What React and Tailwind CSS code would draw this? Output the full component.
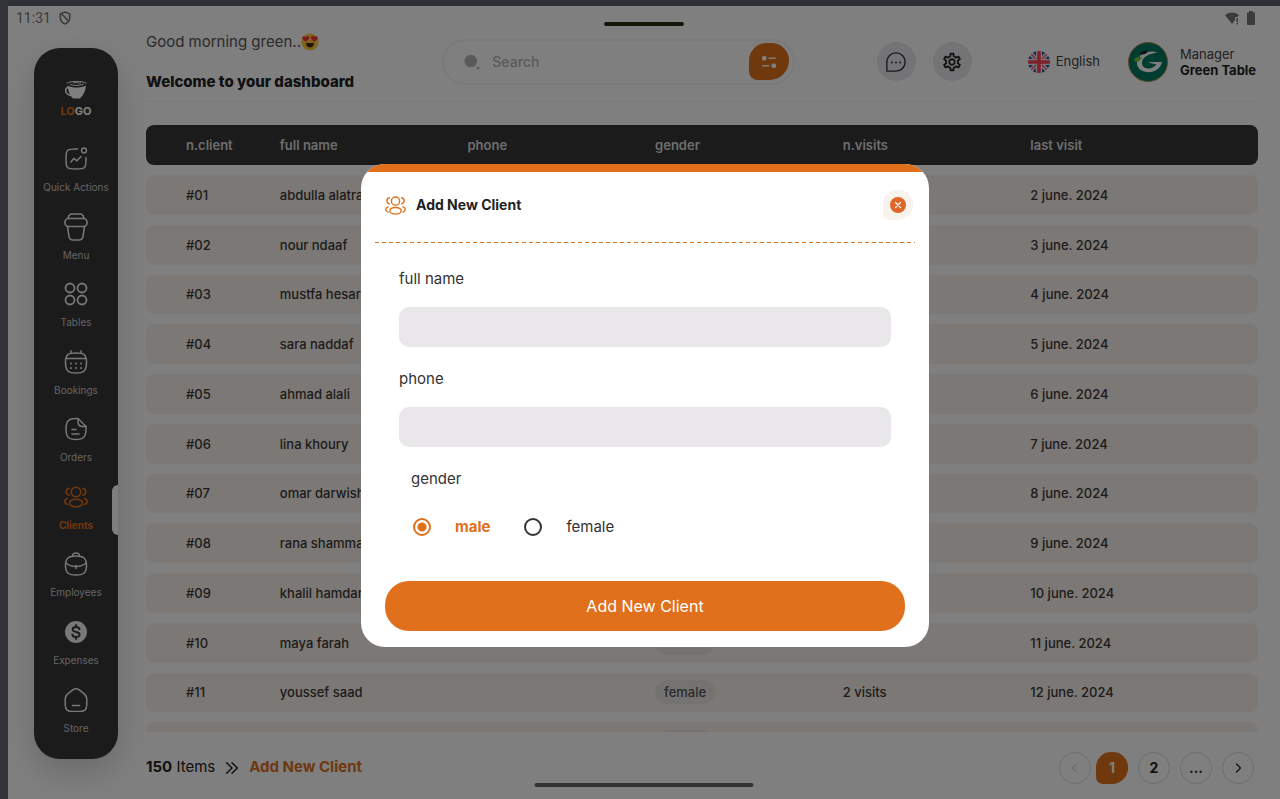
import React, { useState } from "react";
import { MdOutlineSettings } from "react-icons/md";

function Svg({ size = "size-6", children, width = 1.5 }) {
  return (
    <svg viewBox="0 0 24 24" fill="none" stroke="currentColor" strokeWidth={width} strokeLinecap="round" strokeLinejoin="round" className={`${size} shrink-0`} aria-hidden="true">
      {children}
    </svg>
  );
}

function UsersIcon({ size }) {
  return (
    <Svg size={size} width={1.6}>
      <circle cx="12" cy="7" r="4.7" />
      <path d="M19 3.200c1.800.4 2.800 1.700 2.800 3.400S20.700 9.700 19 10.200M5 3.200C3.200 3.600 2.200 4.900 2.200 6.600S3.300 9.700 5 10.200" />
      <ellipse cx="12" cy="18" rx="6.500" ry="3.800" />
      <path d="M20.500 13.500c1.700.5 2.700 1.500 2.700 2.900 0 1.500-1 2.600-2.700 3.100M3.500 13.500C1.800 14 .8 15 .8 16.400c0 1.500 1 2.600 2.700 3.100" />
    </Svg>
  );
}

const NAV = [
  {
    label: "Quick Actions",
    icon: (
      <Svg>
        <path d="M22 10.5V12c0 4.7 0 7.07-1.46 8.54C19.07 22 16.7 22 12 22s-7.07 0-8.54-1.46C2 19.07 2 16.7 2 12s0-7.07 1.46-8.54C4.93 2 7.3 2 12 2h1.5" />
        <circle cx="20" cy="3.500" r="2.400" />
        <path d="M7 15l2.8-3.6 3 2.4L17 9.5" />
      </Svg>
    ),
  },
  {
    label: "Menu",
    icon: (
      <svg viewBox="0 0 24 28" fill="none" stroke="currentColor" strokeWidth="1.6" strokeLinejoin="round" className="-my-0.5 h-7 w-6 shrink-0" aria-hidden="true">
        <path d="M4 5.5C4.6 2 6 1 8 1h8c2 0 3.400 1 4 4.500" />
        <rect x="1" y="5.500" width="22" height="8" rx="3.500" />
        <path d="M3.500 13.500l1.400 9.500c.4 2.700 1.700 4 4.100 4h6c2.400 0 3.700-1.300 4.100-4l1.400-9.500" />
      </svg>
    ),
  },
  {
    label: "Tables",
    icon: (
      <Svg width={1.8}>
        <circle cx="6" cy="6" r="4.5" />
        <circle cx="18" cy="6" r="4.5" />
        <circle cx="6" cy="18" r="4.5" />
        <circle cx="18" cy="18" r="4.5" />
      </Svg>
    ),
  },
  {
    label: "Bookings",
    icon: (
      <Svg>
        <path d="M2 8.500h20M7 3.500V.8M17 3.500V.8" />
        <path d="M12 3c-8 0-10.500 1-10.500 9.500 0 8.500 3 10.500 10.500 10.500s10.500-2 10.500-10.500C22.500 4 20 3 12 3z" />
        <path strokeWidth="2" d="M7 13.500h.01M12 13.500h.01M17 13.500h.01M7 18h.01M12 18h.01M17 18h.01" />
      </Svg>
    ),
  },
  {
    label: "Orders",
    icon: (
      <Svg>
        <path d="M14 1.500h-2C4.500 1.500 2 4 2 12s2.500 10.500 10 10.500S22 20 22 12V9.500z" />
        <path d="M14 1.500V5c0 3 1.500 4.500 4.500 4.500H22M8 12.500h4M8 17h7" />
      </Svg>
    ),
  },
  { label: "Clients", icon: <UsersIcon />, active: true },
  {
    label: "Employees",
    icon: (
      <Svg>
        <path d="M8.500 4c0-2 1-3 3.500-3s3.500 1 3.500 3" />
        <path d="M12 4C5 4 1.500 5.500 1.500 13.500S5 23 12 23s10.500-1.500 10.500-9.500S19 4 12 4z" />
        <path d="M1.800 11c3 2.500 6.500 3.500 10.200 3.500s7.200-1 10.200-3.500M12 13.500v3" />
      </Svg>
    ),
  },
  {
    label: "Expenses",
    icon: (
      <Svg>
        <circle cx="12" cy="12" r="11" fill="currentColor" stroke="none" />
        <path stroke="#363636" strokeWidth="1.900" d="M15.500 9.300C15.200 7.700 13.900 7 12 7c-2 0-3.400.9-3.400 2.500C8.600 13 15.600 11 15.600 14.500c0 1.600-1.500 2.500-3.600 2.500s-3.400-.9-3.700-2.500M12 5v2M12 17v2" />
      </Svg>
    ),
  },
  {
    label: "Store",
    icon: (
      <Svg>
        <path d="M9.200 1.700L4 5.700C2 7.300 1.200 8.500 1.200 11v5c0 5.500 1.500 7.500 7 7.500h7.600c5.500 0 7-2 7-7.500v-5c0-2.500-.8-3.700-2.800-5.300l-5.200-4c-2-1.500-3.600-1.500-5.600 0z" />
        <path d="M8.500 17.500h7" />
      </Svg>
    ),
  },
];

const CLIENTS = [
  ["#01", "abdulla alatrash", "male", "2 visits", "2 june. 2024"],
  ["#02", "nour ndaaf", "female", "2 visits", "3 june. 2024"],
  ["#03", "mustfa hesary", "male", "2 visits", "4 june. 2024"],
  ["#04", "sara naddaf", "female", "2 visits", "5 june. 2024"],
  ["#05", "ahmad alali", "male", "2 visits", "6 june. 2024"],
  ["#06", "lina khoury", "female", "2 visits", "7 june. 2024"],
  ["#07", "omar darwish", "male", "2 visits", "8 june. 2024"],
  ["#08", "rana shammas", "female", "2 visits", "9 june. 2024"],
  ["#09", "khalil hamdan", "male", "2 visits", "10 june. 2024"],
  ["#10", "maya farah", "", "", "11 june. 2024"],
  ["#11", "youssef saad", "female", "2 visits", "12 june. 2024"],
  ["", "", "", "", ""],
];

const COLUMNS = ["n.client", "full name", "phone", "gender", "n.visits", "last visit"];

function StatusBar() {
  return (
    <div className="flex h-6 shrink-0 items-center justify-between pr-6 pl-2 text-[#777]">
      <div className="flex items-center gap-2 font-[Roboto,sans-serif] text-sm">
        <span>11:31</span>
        <svg viewBox="0 0 14 16" className="h-3.5 w-3" fill="none" stroke="currentColor" strokeWidth="1.800" aria-hidden="true">
          <path d="M7 1L1.500 3v4.500C1.500 11 4 13.800 7 15c3-1.200 5.500-4 5.500-7.500V3z" />
          <path d="M3 3l8.500 9" />
        </svg>
      </div>
      <div className="flex items-center gap-1.5">
        <svg viewBox="0 0 16 14" className="h-3.5 w-4" fill="currentColor" aria-hidden="true">
          <path d="M1 4.200C4.500.6 11.500.6 15 4.200L13.200 6H11v3.200L8 13z" />
          <path d="M12.400 7h1.500v4h-1.500zM12.400 12h1.500v1.500h-1.500z" />
        </svg>
        <svg viewBox="0 0 10 14" className="h-3.5 w-2.5" fill="currentColor" aria-hidden="true">
          <path d="M3 0h4v1.500h1c.7 0 1 .4 1 1V13c0 .6-.3 1-1 1H2c-.7 0-1-.4-1-1V2.500c0-.6.3-1 1-1h1z" />
        </svg>
      </div>
    </div>
  );
}

function Sidebar() {
  return (
    <aside className="mt-[18px] mb-10 ml-[26px] flex w-21 shrink-0 flex-col rounded-[26px] bg-[#363636] pt-8 pb-1 shadow-[0_12px_32px_rgba(0,0,0,0.18)]">
      <div className="flex h-[67px] shrink-0 flex-col items-center gap-1 text-white">
        <svg viewBox="0 0 24 19" className="h-[19px] w-6" aria-hidden="true">
          <path d="M3.500 5.500c5 2.800 13 2.800 18.500 0-.3 5-2.500 10-6.200 13H9.200C6 16 4 11 3.500 5.500z" fill="#fff" />
          <path d="M4 7.500C.5 7.500.5 14.500 7 15.500" fill="none" stroke="#fff" strokeWidth="1.500" />
          <path d="M2.500 3.200C7 .8 18 .8 22.500 3.200M6 4.500c4 1.300 9.500 1.300 13.500-.3M9 2.800c3-1 6 .9 8 0" fill="none" stroke="#fff" strokeWidth="1" />
        </svg>
        <p className="text-[11px] leading-4 font-bold">
          <span className="text-[#e0701b]">LO</span>GO
        </p>
      </div>
      <nav className="flex flex-1 flex-col">
        {NAV.map((item) => (
          <a
            key={item.label}
            href="#"
            aria-current={item.active ? "page" : undefined}
            className={`relative flex flex-1 flex-col items-center gap-2.5 text-[10px] leading-3 ${item.active ? "font-bold text-[#e0701b]" : "text-[#f0f0f0]"}`}
          >
            {item.icon}
            <span className={item.active ? "" : "text-[#c8c8c8]"}>{item.label}</span>
            {item.active && <span className="absolute top-0 right-0 h-[50px] w-1.5 rounded-l-md bg-white" />}
          </a>
        ))}
      </nav>
    </aside>
  );
}

function Header() {
  return (
    <header className="flex h-[72px] shrink-0 items-center justify-between border-b border-[#f2f2f2] pb-2">
      <div className="flex w-[215px] flex-col gap-5 leading-5">
        <p className="flex items-center text-[15px] whitespace-nowrap text-[#555]">
          Good morning green..
          <svg viewBox="0 0 20 20" className="size-[18px]" role="img" aria-label="heart eyes">
            <circle cx="10" cy="10" r="9.500" fill="#ffc83d" />
            <path d="M5.500 11h9c-.3 3.500-2 5-4.500 5s-4.200-1.500-4.500-5z" fill="#4a2a10" />
            <path d="M5.500 10L1.500 6.500C.5 4 3 2.500 5 4.500c1.500-2.300 4.500-1 4 1.500z" fill="#ff3038" />
            <path d="M14.500 10l4-3.500c1-2.500-1.500-4-3.500-2-1.500-2.300-4.500-1-4 1.500z" fill="#ff3038" />
          </svg>
        </p>
        <h1 className="text-[15px] font-extrabold whitespace-nowrap text-[#222]">Welcome to your dashboard</h1>
      </div>

      <div className="flex h-[46px] w-[353px] items-center gap-3 rounded-full border-2 border-[#f4f4f6] pr-1 pl-5">
        <svg viewBox="0 0 16 16" className="size-4 shrink-0 text-[#b4b4b8]" fill="currentColor" aria-hidden="true">
          <circle cx="6.800" cy="7" r="6.300" />
          <circle cx="14" cy="14" r="1.500" />
        </svg>
        <input type="search" aria-label="Search" placeholder="Search" className="min-w-0 flex-1 bg-transparent text-sm font-medium outline-none placeholder:text-[#b4b4b8]" />
        <button type="button" aria-label="Filter" className="flex h-[37px] w-10 items-center justify-center rounded-[18px_18px_20px_9px] bg-[#e0701b]">
          <svg viewBox="0 0 16 14" className="h-3.5 w-4" fill="#fff" aria-hidden="true">
            <rect x="1" y="1" width="4.500" height="4.500" rx="1.500" />
            <rect x="7.500" y="2.500" width="7.500" height="1.600" rx=".8" />
            <rect x="10.500" y="8.500" width="4.500" height="4.500" rx="1.500" />
            <rect x="1" y="10" width="7.500" height="1.600" rx=".8" />
          </svg>
        </button>
      </div>

      <div className="flex items-center gap-7">
        <div className="mr-7 flex gap-[17px]">
          <button type="button" aria-label="Messages" className="flex size-[39px] items-center justify-center rounded-full bg-[#e9e7ea] text-[#333]">
            <Svg size="size-[22px]">
              <path d="M2 22V12A10 10 0 1 1 12 22z" />
              <path strokeWidth="2" d="M7.500 12.500h.01M12 12.500h.01M16.500 12.500h.01" />
            </Svg>
          </button>
          <button type="button" aria-label="Settings" className="flex size-[39px] items-center justify-center rounded-full bg-[#e9e7ea] text-[#222]">
            <MdOutlineSettings className="size-[22px]" />
          </button>
        </div>
        <button type="button" className="flex items-center gap-1.5 text-[13px] text-[#444]">
          <svg viewBox="0 0 22 22" className="size-[22px]" aria-hidden="true">
            <clipPath id="flag"><circle cx="11" cy="11" r="11" /></clipPath>
            <g clipPath="url(#flag)">
              <path fill="#f0f0f0" d="M0 0h22v22H0z" />
              <path fill="#2a5cb0" d="M8 0v5L3 0zM0 3l5 5H0zM14 0v5l5-5zM22 3l-5 5h5zM8 22v-5l-5 5zM0 19l5-5H0zM14 22v-5l5 5zM22 19l-5-5h5z" />
              <path stroke="#ff4055" strokeWidth="1.200" d="M1 1l7 7M21 1l-7 7M1 21l7-7M21 21l-7-7" />
              <path fill="#ff4055" d="M9.200 0h3.600v9.200H22v3.600h-9.200V22H9.200v-9.200H0V9.200h9.200z" />
            </g>
          </svg>
          English
        </button>
        <div className="flex items-center gap-3">
          <svg viewBox="0 0 40 40" className="size-10" role="img" aria-label="Green Table">
            <circle cx="20" cy="20" r="19.500" fill="#007a60" stroke="#b08a4a" strokeWidth="1" />
            <path d="M29.500 10.500C22 7.500 10 11 9 20c-.6 8 7.500 11 14 10 6-1 10-5 11-10H20.500c2.500 1.500 5 2 8 2-2 3.500-6 5-10 4.200-5-1-6-6.500-2.500-10.200 3.500-3.800 8.500-4.500 13.500-5.500z" fill="#fff" />
            <path d="M6 17c1.500-1.500 5-3 8-2-1 3-3.500 5-6.500 5C6.500 19 6 18 6 17z" fill="#7fbf3a" />
            <path d="M12 12c2-3.500 6-4 8-3-1 2.500-4 4.500-8 3z" fill="#222" />
          </svg>
          <p className="w-[78px] text-[13px] leading-4 whitespace-nowrap text-[#444]">
            Manager
            <br />
            <strong className="font-bold text-[#222]">Green Table</strong>
          </p>
        </div>
      </div>
    </header>
  );
}

function ClientsTable() {
  return (
    <div className="mt-[23px] min-h-0 flex-1 overflow-hidden">
      <table className="block w-full text-[13px] leading-5 text-[#383838]">
        <thead className="block">
          <tr className="grid h-10 grid-cols-11 items-center rounded-lg bg-[#363636] px-10 text-left text-[#dcdcdc]">
            {COLUMNS.map((c) => (
              <th key={c} scope="col" className="col-span-2 font-semibold first:col-span-1">{c}</th>
            ))}
          </tr>
        </thead>
        <tbody className="mt-2.5 grid h-[587px] auto-rows-fr gap-2.5">
          {CLIENTS.map(([id, name, gender, visits, date], i) => (
            <tr key={i} className="grid grid-cols-11 items-center rounded-lg bg-[#f9f0ea] px-10 font-medium whitespace-nowrap">
              <td>{id}</td>
              <td className="col-span-2">{name}</td>
              <td className="col-span-2" />
              <td className="col-span-2">
                <span className="flex h-6 w-15 items-center justify-center rounded-full bg-[#ebe6e3] text-[#555]">{gender}</span>
              </td>
              <td className="col-span-2">{visits}</td>
              <td className="col-span-2">{date}</td>
            </tr>
          ))}
        </tbody>
      </table>
    </div>
  );
}

function Footer() {
  const circle = "flex size-8 items-center justify-center rounded-full border border-[#dcdcdc] text-[#222]";
  return (
    <footer className="flex h-[67px] shrink-0 items-center justify-between pt-1 pr-1">
      <div className="flex items-center gap-[9px] text-[15px] text-[#222]">
        <p><b>150</b> Items</p>
        <Svg size="size-4" width={2.2}>
          <path d="M4 4l8 8-8 8M12 4l8 8-8 8" />
        </Svg>
        <a href="#" className="font-bold text-[#e0701b]">Add New Client</a>
      </div>
      <nav aria-label="Pages" className="flex gap-2.5 text-sm font-bold">
        <div className="flex gap-[5px]">
          <button type="button" aria-label="Previous page" className={circle}>
            <Svg size="size-3" width={2}><path className="text-[#bbb]" stroke="currentColor" d="M15 4l-8 8 8 8" /></Svg>
          </button>
          <button type="button" className="flex size-8 items-center justify-center rounded-[15px_15px_16px_7px] bg-[#e0701b] text-white">1</button>
        </div>
        <button type="button" className={circle}>2</button>
        <button type="button" className={circle}>...</button>
        <button type="button" aria-label="Next page" className={circle}>
          <Svg size="size-3" width={2.4}><path d="M9 4l8 8-8 8" /></Svg>
        </button>
      </nav>
    </footer>
  );
}

function AddClientDialog() {
  const [gender, setGender] = useState("male");
  return (
    <div className="absolute inset-0 flex items-center justify-center bg-black/50 pt-1.5 pl-0.5">
      <form role="dialog" aria-modal="true" aria-labelledby="dialog-title" onSubmit={(e) => e.preventDefault()} className="w-[568px] overflow-hidden rounded-3xl bg-white text-[#333]">
        <div className="h-2 bg-[#e0701b]" />
        <div className="flex h-[70px] items-center gap-2.5 pr-4 pb-1 pl-6">
          <span className="text-[#e0701b]"><UsersIcon size="size-[21px]" /></span>
          <h2 id="dialog-title" className="flex-1 text-sm font-bold text-[#222]">Add New Client</h2>
          <button type="button" aria-label="Close" className="flex size-[30px] items-center justify-center rounded-[14px_14px_15px_6px] bg-[#f9f3ee]">
            <svg viewBox="0 0 16 16" className="size-4" aria-hidden="true">
              <circle cx="8" cy="8" r="8" fill="#e0662a" />
              <path d="M5.500 5.500l5 5M10.500 5.500l-5 5" stroke="#fff" strokeWidth="1.200" strokeLinecap="round" />
            </svg>
          </button>
        </div>
        <div className="mx-3.5 h-px bg-[repeating-linear-gradient(90deg,#e0701b_0_4px,transparent_4px_7px)]" />
        <div className="flex flex-col px-[38px] pt-6 text-[15px] leading-6">
          <label htmlFor="full-name">full name</label>
          <input id="full-name" type="text" className="mt-4 h-10 rounded-[10px] bg-[#e9e7ea] px-4 outline-none" />
          <label htmlFor="phone" className="mt-5">phone</label>
          <input id="phone" type="tel" className="mt-4 h-10 rounded-[10px] bg-[#e9e7ea] px-4 outline-none" />
          <fieldset className="mt-5 px-3">
            <legend>gender</legend>
            <div className="mt-6 flex gap-8">
              {["male", "female"].map((g) => (
                <label key={g} className={`flex items-center gap-6 ${gender === g ? "font-bold text-[#e0701b]" : ""}`}>
                  <input
                    type="radio"
                    name="gender"
                    value={g}
                    checked={gender === g}
                    onChange={() => setGender(g)}
                    className="ml-0.5 size-[18px] appearance-none rounded-full border-2 border-[#333] bg-white checked:border-[#e0701b] checked:bg-[radial-gradient(circle,#e0701b_4px,white_5px)]"
                  />
                  {g}
                </label>
              ))}
            </div>
          </fieldset>
        </div>
        <div className="px-6 pt-[42px] pb-4">
          <button type="submit" className="h-[50px] w-full rounded-3xl bg-[#e0701b] text-base text-white">Add New Client</button>
        </div>
      </form>
    </div>
  );
}

export default function App() {
  return (
    <div className="h-screen bg-[#34353b] pl-2 font-[Inter,sans-serif]">
      <div className="relative flex h-full flex-col overflow-hidden border-t-6 border-[#2d3035] bg-white">
        <StatusBar />
        <span className="absolute top-4 left-1/2 h-1 w-20 -translate-x-1/2 rounded-full bg-[#2a2a16]" />
        <div className="flex min-h-0 flex-1">
          <Sidebar />
          <main className="ml-7 flex min-w-0 flex-1 flex-col pr-[22px]">
            <Header />
            <ClientsTable />
            <Footer />
          </main>
        </div>
        <span className="absolute bottom-3 left-1/2 h-1 w-[219px] -translate-x-1/2 rounded-full bg-[#666]" />
        <AddClientDialog />
      </div>
    </div>
  );
}
